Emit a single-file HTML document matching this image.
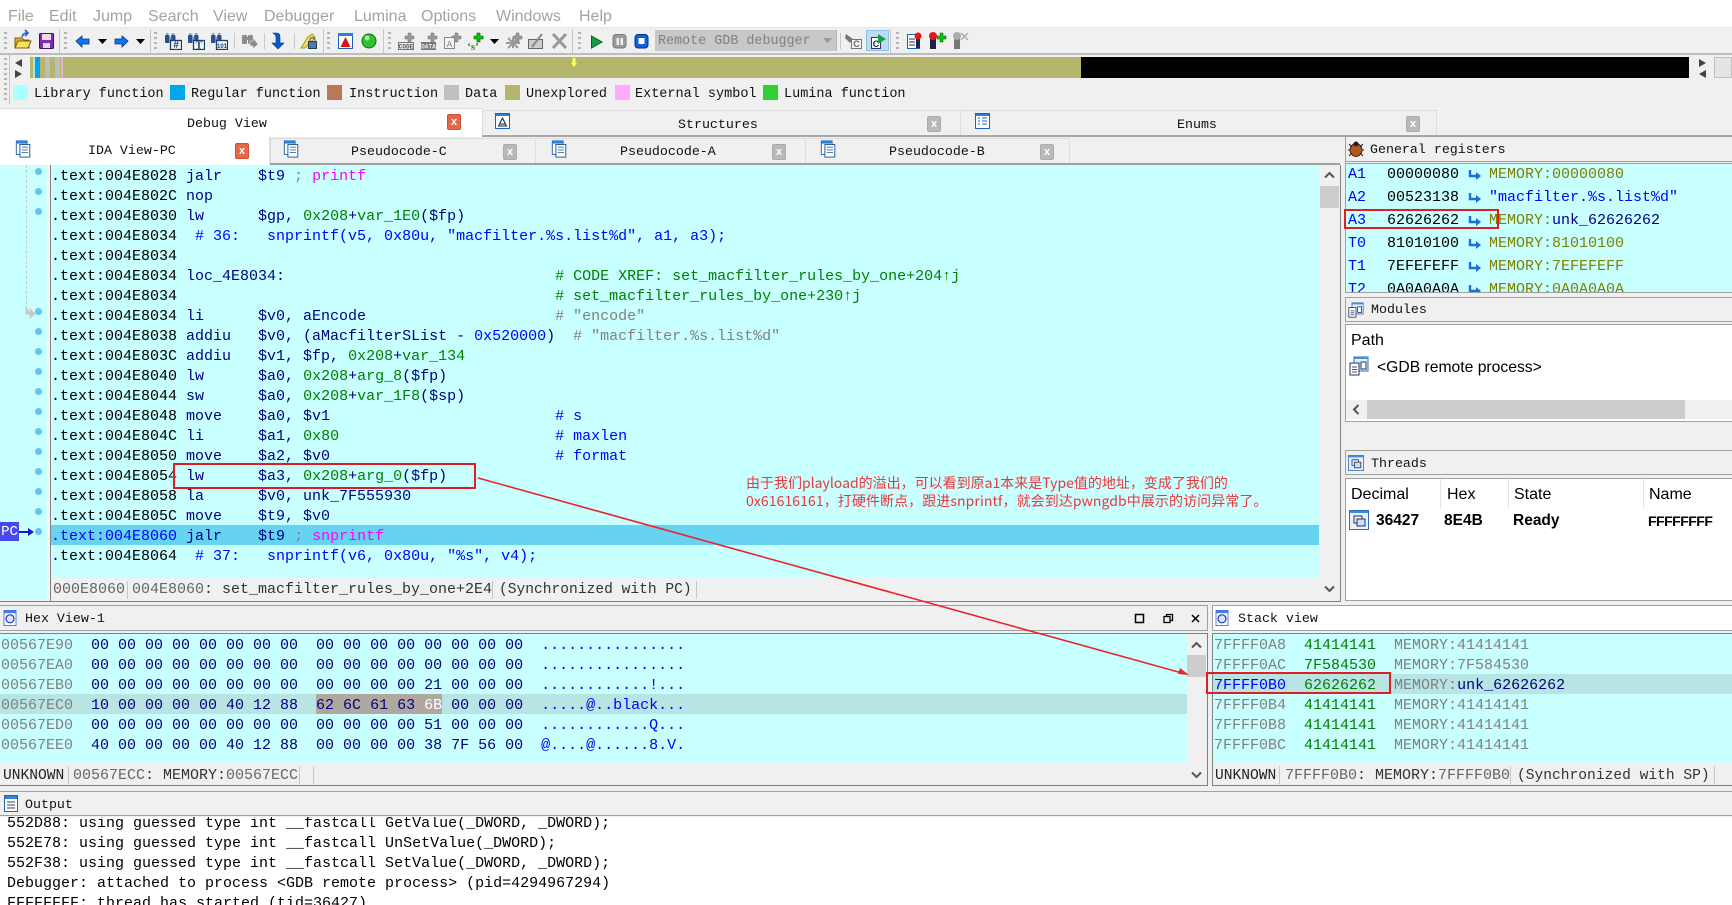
<!DOCTYPE html>
<html><head><meta charset="utf-8"><style>
html,body{margin:0;padding:0;background:#f0f0f0}
#p{position:relative;width:1732px;height:905px;overflow:hidden;background:#f0f0f0;font-family:"Liberation Mono",monospace;font-size:15px;color:#000}
.a{position:absolute}
.t{position:absolute;white-space:pre;line-height:20px;height:20px}
.m{position:absolute;top:6px;font:16px/22px "Liberation Sans",sans-serif;color:#a3a3a3;white-space:pre}
.l{position:absolute;top:85px;width:15px;height:15px}
.lt{position:absolute;top:85px;font-size:13.5px;line-height:20px;white-space:pre;color:#111}
.tt{position:absolute;font-size:13.3px;line-height:20px;white-space:pre;color:#111}
.x{position:absolute;width:12px;height:14px;border:1px solid #aaa;border-radius:2px;background:#b9b9b9;color:#fff;font:bold 11px/14px "Liberation Sans",sans-serif;text-align:center}
.x.r{background:#e5684a;border-color:#d05030}
.n{color:#000080}.g{color:#008000}.b{color:#0000ff}.k{color:#808080}.f{color:#ff00ff}.o{color:#808000}
.sep{position:absolute;width:1px;background:#c8c8c8}
.ic{position:absolute}
.dot{position:absolute;left:35px;width:7px;height:7px;border-radius:50%;background:#62c6f5}
.ttl{position:absolute;background:#f0f0f0;border:1px solid #a0a0a0;box-sizing:border-box}
.ui{font-family:"Liberation Sans",sans-serif}
.grip{position:absolute;width:3px;background:repeating-linear-gradient(#b4b4b4 0 2px,transparent 2px 5px)}
</style></head><body><div id="p">
<svg width="0" height="0" style="position:absolute"><defs>
<symbol id="doc" viewBox="0 0 18 20"><rect x="1" y="1" width="12" height="15" fill="#fff" stroke="#1a5fb4"/><rect x="1" y="1" width="12" height="3" fill="#2a80e0"/><rect x="5" y="5" width="11" height="14" fill="#fff" stroke="#1a4f94"/><path d="M7 8h7M7 11h7M7 14h7" stroke="#3a6fa4"/></symbol>
<symbol id="win" viewBox="0 0 20 20"><rect x=".5" y=".5" width="19" height="19" fill="#e8f0fa" stroke="#2a70c0"/><rect x="1" y="1" width="18" height="2" fill="#3a90e8"/><rect x="5" y="6" width="8" height="7" fill="none" stroke="#235"/><rect x="8" y="9" width="8" height="7" fill="#cfe0f5" stroke="#235"/></symbol>
<symbol id="hex" viewBox="0 0 16 20"><rect x=".5" y=".5" width="15" height="19" fill="#fff" stroke="#2a60d0"/><rect x="1" y="1" width="14" height="3" fill="#3a80e8"/><circle cx="8" cy="11" r="5" fill="#dde6ff" stroke="#2030c0" stroke-width="1.5"/></symbol>
<symbol id="mod" viewBox="0 0 20 20"><rect x="5" y="1" width="14" height="14" fill="#e8f0fa" stroke="#2a70c0"/><rect x="5" y="1" width="14" height="2" fill="#3a90e8"/><rect x="1" y="7" width="9" height="12" fill="#fff" stroke="#235"/><path d="M3 11h5M3 13.5h5M3 16h5" stroke="#357"/><rect x="12" y="6" width="5" height="7" fill="#fff" stroke="#235"/></symbol>
<symbol id="bino" viewBox="0 0 17 17"><rect x="0" y="2" width="4.500" height="8" rx="1" fill="#2a4f8a"/><rect x="6" y="2" width="4.500" height="8" rx="1" fill="#2a4f8a"/><rect x="4" y="4" width="2.500" height="3" fill="#7a94c0"/><rect x="1" y="0" width="2.500" height="2" fill="#8aa0c4"/><rect x="7" y="0" width="2.500" height="2" fill="#8aa0c4"/><rect x="5.500" y="7.500" width="11" height="9" fill="#f4f8fc" stroke="#14406e" stroke-width="1.300"/></symbol>
</defs></svg>

<!-- menu -->
<div class="a" style="left:0;top:0;width:1732px;height:27px;background:#fff"></div>
<span class="m" style="left:8px">File</span><span class="m" style="left:49px">Edit</span><span class="m" style="left:93px">Jump</span><span class="m" style="left:148px">Search</span><span class="m" style="left:213px">View</span><span class="m" style="left:264px">Debugger</span><span class="m" style="left:354px">Lumina</span><span class="m" style="left:421px">Options</span><span class="m" style="left:496px">Windows</span><span class="m" style="left:579px">Help</span>

<!-- toolbar -->
<div class="a" style="left:0;top:27px;width:1732px;height:1px;background:#e4e4e4"></div>
<div class="a" style="left:0;top:53px;width:1732px;height:2px;background:#bdbdbd"></div>
<div class="sep" style="left:59px;top:29px;height:24px"></div><div class="sep" style="left:150px;top:29px;height:24px"></div><div class="sep" style="left:323px;top:29px;height:24px"></div><div class="sep" style="left:383px;top:29px;height:24px"></div><div class="sep" style="left:572px;top:29px;height:24px"></div><div class="sep" style="left:890px;top:29px;height:24px"></div>
<div class="sep" style="left:234px;top:33px;height:16px"></div><div class="sep" style="left:264px;top:33px;height:16px"></div><div class="sep" style="left:294px;top:33px;height:16px"></div><div class="sep" style="left:840px;top:33px;height:16px"></div>
<div class="grip" style="left:4px;top:32px;height:20px"></div><div class="grip" style="left:64px;top:32px;height:20px"></div><div class="grip" style="left:154px;top:32px;height:20px"></div><div class="grip" style="left:327px;top:32px;height:20px"></div><div class="grip" style="left:388px;top:32px;height:20px"></div><div class="grip" style="left:578px;top:32px;height:20px"></div><div class="grip" style="left:896px;top:32px;height:20px"></div>

<svg class="ic" style="left:0;top:25px" width="1000" height="30" viewBox="0 0 1000 30">
<!-- open -->
<path d="M15 13h7l2 2h5v8H15z" fill="#d8b020" stroke="#806010"/><path d="M15 23l3-7h13l-3 7z" fill="#f8e060" stroke="#806010"/><path d="M22 12q1-4 5-4M25 5l3 3-3 3" fill="none" stroke="#2060d0" stroke-width="1.600"/>
<!-- save -->
<rect x="39.500" y="8.500" width="14" height="15" rx="1" fill="#7a2fb0" stroke="#401070"/><rect x="42" y="9" width="9" height="6" fill="#f4d8e8"/><rect x="43" y="18" width="7" height="5" fill="#ddd"/>
<!-- back / forward -->
<path d="M76 16l6-5v3h7v5h-7v3z" fill="#0a78e8" stroke="#003090" stroke-width=".8"/>
<path d="M128 16l-6-5v3h-7v5h7v3z" fill="#0a78e8" stroke="#003090" stroke-width=".8"/>
<path d="M98 14h9l-4.500 5zM136 14h9l-4.500 5zM490 14h9l-4.500 5z" fill="#000"/>
<!-- binoculars -->
<use href="#bino" x="165" y="8" width="17" height="17"/><use href="#bino" x="188" y="8" width="17" height="17"/><use href="#bino" x="211" y="8" width="17" height="17"/>
<text x="176" y="23" font-family="Liberation Sans" font-size="10" font-weight="bold" fill="#14406e" text-anchor="middle">#</text>
<text x="199" y="23.500" font-family="Liberation Serif" font-size="10" font-weight="bold" fill="#14406e" text-anchor="middle">T</text>
<text x="222" y="23" font-family="Liberation Sans" font-size="6" font-weight="bold" fill="#14406e" text-anchor="middle">101</text>
<!-- gray find next -->
<g fill="#8c8c8c"><rect x="242" y="10" width="5" height="9" rx="1"/><rect x="248" y="10" width="5" height="9" rx="1"/><rect x="246" y="12" width="3" height="3"/><path d="M250 16h3v-3l5 6-5 5v-3h-3z" stroke="#eee" stroke-width=".5"/></g>
<!-- jump down -->
<path d="M273 8h4q3 0 3 4v6h4l-6 6-6-6h4v-6q0-2-3-4z" fill="#0a58d0" stroke="#003a90" stroke-width=".6"/>
<!-- lock -->
<path d="M301 23l7-11 4-3 3 3-3 4-7 7z" fill="#f0dc70" stroke="#a89020"/><rect x="308.500" y="16.500" width="8" height="7" fill="#4a7ab0" stroke="#244"/><path d="M310 16v-2q2.500-3 5 0v2" fill="none" stroke="#555"/>
<!-- A -->
<rect x="338.500" y="8.500" width="14" height="15" fill="#fff" stroke="#1a60c0"/><rect x="338" y="8" width="15" height="3" fill="#2a80e0"/><path d="M345.500 12l5 10h-10z" fill="#e01010"/>
<circle cx="369" cy="16" r="7" fill="#30c030" stroke="#107010"/><circle cx="367" cy="13" r="2.500" fill="#a0f0a0"/>
<!-- add group -->
<g fill="#9a9a9a" stroke="#6e6e6e" stroke-width=".5">
<path d="M408 8h3v3h3v3h-3v3h-3v-3h-3v-3h3z"/><path d="M431 8h3v3h3v3h-3v3h-3v-3h-3v-3h3z"/><path d="M455 8h3v3h3v3h-3v3h-3v-3h-3v-3h3z"/><path d="M516 8h3v3h3v3h-3v3h-3v-3h-3v-3h3z"/>
</g>
<rect x="398.500" y="17.500" width="15" height="7" fill="#eee" stroke="#777"/><text x="406" y="23.500" font-family="Liberation Mono" font-size="6" font-weight="bold" fill="#555" text-anchor="middle">CODE</text>
<rect x="421" y="17" width="15" height="8" fill="#777"/><text x="428.500" y="23.500" font-family="Liberation Mono" font-size="6" font-weight="bold" fill="#eee" text-anchor="middle">DATA</text>
<rect x="444.500" y="12.500" width="10" height="11" fill="#f4f4f4" stroke="#888"/><text x="449.500" y="22" font-family="Liberation Mono" font-size="9" fill="#777" text-anchor="middle">A</text>
<path d="M477 8h3v3h3v3h-3v3h-3v-3h-3v-3h3z" fill="#10c010" stroke="#005000" stroke-width=".6"/>
<text x="473" y="25" font-family="Liberation Serif" font-size="11" font-weight="bold" fill="#2a8a2a" text-anchor="middle">‘s’</text>
<path d="M508 13l5 5 5-5M508 23l5-5 5 5M513 13v10M506 18h14" stroke="#999" stroke-width="2" fill="none"/>
<rect x="528.500" y="14.500" width="14" height="9" fill="#ccc" stroke="#666"/><path d="M532 22l10-13" stroke="#888" stroke-width="2"/>
<path d="M553 9l13 14M566 9l-13 14" stroke="#999" stroke-width="3"/>
<!-- play etc -->
<path d="M591.500 11l10.500 6-10.500 6z" fill="#189a40" stroke="#0a5a20"/>
<rect x="613" y="9.500" width="13" height="13.500" rx="3" fill="#9a9a9a" stroke="#777"/><rect x="616.500" y="13" width="2.500" height="7" fill="#eee"/><rect x="620.500" y="13" width="2.500" height="7" fill="#eee"/>
<rect x="635" y="9.500" width="13" height="13.500" rx="3" fill="#1060e0" stroke="#003090"/><rect x="638.500" y="13" width="6" height="6" fill="#fff"/>
<!-- C icons -->
<path d="M846 9l7 5-3 4-5-5z" fill="#777"/><rect x="851.500" y="14.500" width="10" height="9" fill="#f4f4f4" stroke="#777"/><text x="856.500" y="22" font-family="Liberation Sans" font-size="9" font-weight="bold" fill="#666" text-anchor="middle">C</text>
<rect x="866.500" y="5.500" width="22" height="20" fill="#bcdcf4" stroke="#90c0e8"/><rect x="871.500" y="12.500" width="9" height="11" fill="#fff" stroke="#336"/><text x="876" y="22" font-family="Liberation Sans" font-size="9" font-weight="bold" fill="#124" text-anchor="middle">C</text><path d="M878 9l8 5-8 5z" fill="#18a040"/>
<!-- bp -->
<rect x="907.500" y="9.500" width="12" height="14" fill="#fff" stroke="#1a60c0"/><path d="M909 14h6M909 17h6M909 20h6" stroke="#234"/><rect x="916" y="12" width="4" height="11" fill="#224"/><circle cx="918" cy="11" r="3.500" fill="#e01818"/>
<rect x="930" y="13" width="6" height="11" fill="#224"/><circle cx="933" cy="11" r="4" fill="#e01818"/><path d="M937 11h3V8h3v3h3v3h-3v3h-3v-3h-3z" fill="#10c010" stroke="#005000" stroke-width=".5"/>
<rect x="954" y="13" width="6" height="11" fill="#777"/><circle cx="957" cy="11" r="4" fill="#aaa"/><path d="M961 8l7 7M968 8l-7 7" stroke="#aaa" stroke-width="1.400"/>
</svg>
<div class="a" style="left:655px;top:30px;width:181px;height:21px;background:#c8c8c8;border-right:1px solid #b8b8b8"></div>
<span class="t" style="left:658px;top:32px;color:#808080;font-size:13.4px">Remote GDB debugger</span>
<svg class="ic" style="left:823px;top:38px" width="10" height="6"><path d="M0 0h9L4.500 5z" fill="#999"/></svg>

<!-- overview nav -->
<div class="a" style="left:30px;top:57px;width:1051px;height:21px;background:#b5b56c"></div>
<div class="a" style="left:30px;top:57px;width:34px;height:21px;background:linear-gradient(90deg,#b5b56c 0 3px,#b0e8d8 3px 5px,#08a0e8 5px 10px,#b5b56c 10px 15px,#bdbdbd 15px 20px,#b5b56c 20px 25px,#bdbdbd 25px 30px,#b5b56c 30px 31px,#e8b0d8 31px 33px,#b5b56c 33px)"></div>
<div class="a" style="left:1081px;top:57px;width:608px;height:21px;background:#000"></div>
<svg class="ic" style="left:571px;top:58px" width="6" height="9"><path d="M1.500 0h3v5H6L3 9 0 5h1.500z" fill="#ffff60"/></svg>
<svg class="ic" style="left:15px;top:59px" width="8" height="19"><path d="M7 0v8L0 4zM0 11l7 4-7 4z" fill="#444"/></svg>
<svg class="ic" style="left:1699px;top:59px" width="8" height="19"><path d="M0 0l7 4-7 4zM7 11v8L0 15z" fill="#444"/></svg>
<div class="a" style="left:1714px;top:57px;width:18px;height:21px;background:#e4e4e4;border:1px solid #c0c0c0;box-sizing:border-box"></div>
<div class="grip" style="left:4px;top:58px;height:45px"></div>
<div class="a" style="left:9px;top:54px;width:1px;height:50px;background:#c8c8c8"></div>

<!-- legend -->
<div class="l" style="left:13px;background:#aaffff"></div><span class="lt" style="left:34px">Library function</span>
<div class="l" style="left:170px;background:#00a8e8"></div><span class="lt" style="left:191px">Regular function</span>
<div class="l" style="left:327px;background:#b8785a"></div><span class="lt" style="left:349px">Instruction</span>
<div class="l" style="left:444px;background:#c0c0c0"></div><span class="lt" style="left:465px">Data</span>
<div class="l" style="left:505px;background:#b5b56c"></div><span class="lt" style="left:526px">Unexplored</span>
<div class="l" style="left:615px;background:#ffaaff"></div><span class="lt" style="left:635px">External symbol</span>
<div class="l" style="left:763px;background:#30d030"></div><span class="lt" style="left:784px">Lumina function</span>

<!-- top tabs -->
<div class="a" style="left:0;top:135px;width:1732px;height:2px;background:#a8a8a8"></div>
<div class="a" style="left:482px;top:110px;width:955px;height:25px;border:1px solid #dcdcdc;border-bottom:0;box-sizing:border-box"></div>
<div class="a" style="left:960px;top:110px;width:1px;height:25px;background:#dcdcdc"></div>
<div class="a" style="left:0;top:108px;width:482px;height:29px;background:#fff;border-top:1px solid #ddd;box-sizing:border-box"></div>
<span class="tt" style="left:187px;top:114px">Debug View</span><span class="tt" style="left:678px;top:115px">Structures</span><span class="tt" style="left:1177px;top:115px">Enums</span>
<div class="x r" style="left:447px;top:114px">x</div><div class="x" style="left:927px;top:116px">x</div><div class="x" style="left:1406px;top:116px">x</div>
<svg class="ic" style="left:495px;top:113px" width="15" height="16"><rect x=".5" y=".5" width="14" height="15" fill="#fff" stroke="#1a60c0"/><rect x="1" y="1" width="13" height="2" fill="#2a80e0"/><path d="M7.500 5l4 8h-8zM5 11h5" fill="none" stroke="#124"/></svg>
<svg class="ic" style="left:975px;top:113px" width="15" height="16"><rect x=".5" y=".5" width="14" height="15" fill="#fff" stroke="#1a60c0"/><rect x="1" y="1" width="13" height="2" fill="#2a80e0"/><path d="M3 5h2M7 5h5M3 8h2M7 8h5M3 11h2M7 11h5" stroke="#1a60c0"/></svg>

<!-- second tabs -->
<div class="a" style="left:0;top:163px;width:1340px;height:2px;background:#a0a0a0"></div>
<div class="a" style="left:270px;top:138px;width:800px;height:25px;border:1px solid #dcdcdc;border-bottom:0;box-sizing:border-box"></div>
<div class="a" style="left:535px;top:138px;width:1px;height:25px;background:#dcdcdc"></div><div class="a" style="left:805px;top:138px;width:1px;height:25px;background:#dcdcdc"></div>
<div class="a" style="left:0;top:136px;width:270px;height:29px;background:#fff;border-right:1px solid #ddd;box-sizing:border-box"></div>
<span class="tt" style="left:88px;top:141px">IDA View-PC</span><span class="tt" style="left:351px;top:142px">Pseudocode-C</span><span class="tt" style="left:620px;top:142px">Pseudocode-A</span><span class="tt" style="left:889px;top:142px">Pseudocode-B</span>
<div class="x r" style="left:235px;top:143px">x</div><div class="x" style="left:503px;top:144px">x</div><div class="x" style="left:772px;top:144px">x</div><div class="x" style="left:1040px;top:144px">x</div>
<svg class="ic" style="left:15px;top:140px" width="17" height="18"><use href="#doc"/></svg><svg class="ic" style="left:283px;top:140px" width="17" height="18"><use href="#doc"/></svg><svg class="ic" style="left:551px;top:140px" width="17" height="18"><use href="#doc"/></svg><svg class="ic" style="left:820px;top:140px" width="17" height="18"><use href="#doc"/></svg>

<!-- gutter + code -->
<div class="a" style="left:0;top:165px;width:47px;height:435px;background:#c8ffff"></div>
<div class="a" style="left:47px;top:165px;width:3px;height:435px;background:#f4f4f4"></div>
<div class="a" style="left:50px;top:165px;width:1270px;height:413px;background:#c8ffff"></div>
<div class="a" style="left:50px;top:165px;width:1px;height:436px;background:#808080"></div>
<div class="a" style="left:51px;top:525px;width:1268px;height:20px;background:#66d4f0"></div>
<div class="a" style="left:26px;top:165px;width:0;height:144px;border-left:1px dashed #c8c8c8"></div>
<svg class="ic" style="left:25px;top:305px" width="12" height="14"><path d="M1 0v9h4M5 4l5 5-5 4z" fill="#c8c8c8" stroke="#c8c8c8"/></svg>
<div class="dot" style="top:168px"></div><div class="dot" style="top:188px"></div><div class="dot" style="top:208px"></div><div class="dot" style="top:308px"></div><div class="dot" style="top:328px"></div><div class="dot" style="top:348px"></div><div class="dot" style="top:368px"></div><div class="dot" style="top:388px"></div><div class="dot" style="top:408px"></div><div class="dot" style="top:428px"></div><div class="dot" style="top:448px"></div><div class="dot" style="top:468px"></div><div class="dot" style="top:488px"></div><div class="dot" style="top:508px"></div><div class="dot" style="top:528px"></div>
<div class="a" style="left:0;top:522px;width:19px;height:19px;background:#4848f0;color:#fff;font-size:14px;line-height:20px;text-align:center">PC</div>
<svg class="ic" style="left:19px;top:526px" width="16" height="12"><path d="M0 6h11" stroke="#1818d0" stroke-width="2"/><path d="M9 2l6 4-6 4z" fill="#1818d0"/></svg>

<div class="t" style="left:51px;top:167px">.text:004E8028 <span class="n">jalr    $t9</span> <span class="k">;</span> <span class="f">printf</span></div>
<div class="t" style="left:51px;top:187px">.text:004E802C <span class="n">nop</span></div>
<div class="t" style="left:51px;top:207px">.text:004E8030 <span class="n">lw      $gp, </span><span class="g">0x208</span><span class="n">+</span><span class="g">var_1E0</span><span class="n">($fp)</span></div>
<div class="t" style="left:51px;top:227px">.text:004E8034  <span class="b"># 36:   snprintf(v5, 0x80u, "macfilter.%s.list%d", a1, a3);</span></div>
<div class="t" style="left:51px;top:247px">.text:004E8034</div>
<div class="t" style="left:51px;top:267px">.text:004E8034 <span class="n">loc_4E8034:</span>                              <span class="g"># CODE XREF: set_macfilter_rules_by_one+204↑j</span></div>
<div class="t" style="left:51px;top:287px">.text:004E8034                                          <span class="g"># set_macfilter_rules_by_one+230↑j</span></div>
<div class="t" style="left:51px;top:307px">.text:004E8034 <span class="n">li      $v0, aEncode</span>                     <span class="k"># "encode"</span></div>
<div class="t" style="left:51px;top:327px">.text:004E8038 <span class="n">addiu   $v0, (aMacfilterSList - </span><span class="b">0x520000</span><span class="n">)</span>  <span class="k"># "macfilter.%s.list%d"</span></div>
<div class="t" style="left:51px;top:347px">.text:004E803C <span class="n">addiu   $v1, $fp, </span><span class="g">0x208</span><span class="n">+</span><span class="g">var_134</span></div>
<div class="t" style="left:51px;top:367px">.text:004E8040 <span class="n">lw      $a0, </span><span class="g">0x208</span><span class="n">+</span><span class="g">arg_8</span><span class="n">($fp)</span></div>
<div class="t" style="left:51px;top:387px">.text:004E8044 <span class="n">sw      $a0, </span><span class="g">0x208</span><span class="n">+</span><span class="g">var_1F8</span><span class="n">($sp)</span></div>
<div class="t" style="left:51px;top:407px">.text:004E8048 <span class="n">move    $a0, $v1</span>                         <span class="b"># s</span></div>
<div class="t" style="left:51px;top:427px">.text:004E804C <span class="n">li      $a1, </span><span class="g">0x80</span>                        <span class="b"># maxlen</span></div>
<div class="t" style="left:51px;top:447px">.text:004E8050 <span class="n">move    $a2, $v0</span>                         <span class="b"># format</span></div>
<div class="t" style="left:51px;top:467px">.text:004E8054 <span class="n">lw      $a3, </span><span class="g">0x208</span><span class="n">+</span><span class="g">arg_0</span><span class="n">($fp)</span></div>
<div class="t" style="left:51px;top:487px">.text:004E8058 <span class="n">la      $v0, unk_7F555930</span></div>
<div class="t" style="left:51px;top:507px">.text:004E805C <span class="n">move    $t9, $v0</span></div>
<div class="t" style="left:51px;top:527px"><span class="b">.text:004E8060</span> <span class="n">jalr    $t9</span> <span class="k">;</span> <span class="f">snprintf</span></div>
<div class="t" style="left:51px;top:547px">.text:004E8064  <span class="b"># 37:   snprintf(v6, 0x80u, "%s", v4);</span></div>

<div class="a" style="left:51px;top:578px;width:1269px;height:23px;background:#f0f0f0"></div>
<div class="sep" style="left:127px;top:581px;height:18px"></div><div class="sep" style="left:492px;top:581px;height:18px"></div><div class="sep" style="left:696px;top:581px;height:18px"></div>
<div class="t" style="left:53px;top:580px;color:#666">000E8060</div>
<div class="t" style="left:132px;top:580px;color:#333"><span style="color:#666">004E8060</span>: set_macfilter_rules_by_one+2E4</div>
<div class="t" style="left:499px;top:580px;color:#333;font-size:14.6px">(Synchronized with PC)</div>
<!-- code scrollbar -->
<div class="a" style="left:1320px;top:165px;width:20px;height:436px;background:#f0f0f0"></div>
<div class="a" style="left:1320px;top:186px;width:19px;height:22px;background:#cdcdcd"></div>
<svg class="ic" style="left:1324px;top:171px" width="11" height="8"><path d="M1 6.500l4.500-4.500 4.500 4.500" fill="none" stroke="#555" stroke-width="2"/></svg>
<svg class="ic" style="left:1324px;top:585px" width="11" height="8"><path d="M1 1.500l4.500 4.500 4.500-4.500" fill="none" stroke="#555" stroke-width="2"/></svg>
<div class="a" style="left:1340px;top:165px;width:1px;height:437px;background:#808080"></div>
<div class="a" style="left:0;top:601px;width:1341px;height:1px;background:#808080"></div>

<!-- annotation -->
<div class="a" style="left:746px;top:473px;font:14px/20px 'Noto Sans CJK SC',sans-serif;color:#e8383c;white-space:pre">由于我们playload的溢出，可以看到原a1本来是Type值的地址，变成了我们的</div>
<div class="a" style="left:746px;top:491px;font:14px/20px 'Noto Sans CJK SC',sans-serif;color:#e8383c;white-space:pre;letter-spacing:.08px">0x61616161，打硬件断点，跟进snprintf，就会到达pwngdb中展示的访问异常了。</div>

<!-- right: registers -->
<div class="ttl" style="left:1345px;top:136px;width:387px;height:26px;border-right:0"></div>
<svg class="ic" style="left:1348px;top:141px" width="16" height="16"><ellipse cx="8" cy="9" rx="6" ry="6.500" fill="#b5581f" stroke="#4a2008"/><circle cx="8" cy="3" r="2.500" fill="#222"/><path d="M1 3l3 3M15 3l-3 3M0 9h2M14 9h2M1 15l3-3M15 15l-3-3" stroke="#222"/></svg>
<span class="tt" style="left:1370px;top:140px">General registers</span>
<div class="a" style="left:1345px;top:163px;width:387px;height:130px;background:#c8ffff;border:1px solid #a0a0a0;border-right:0;box-sizing:border-box;overflow:hidden">
<div class="t" style="left:2px;top:1px"><span class="b">A1</span></div><div class="t" style="left:41px;top:1px">00000080</div><div class="t" style="left:143px;top:1px"><span class="o">MEMORY:00000080</span></div>
<div class="t" style="left:2px;top:24px"><span class="b">A2</span></div><div class="t" style="left:41px;top:24px">00523138</div><div class="t" style="left:143px;top:24px"><span class="b">"macfilter.%s.list%d"</span></div>
<div class="t" style="left:2px;top:47px"><span class="b">A3</span></div><div class="t" style="left:41px;top:47px">62626262</div><div class="t" style="left:143px;top:47px"><span class="o">MEMORY:</span><span class="n">unk_62626262</span></div>
<div class="t" style="left:2px;top:70px"><span class="b">T0</span></div><div class="t" style="left:41px;top:70px">81010100</div><div class="t" style="left:143px;top:70px"><span class="o">MEMORY:81010100</span></div>
<div class="t" style="left:2px;top:93px"><span class="b">T1</span></div><div class="t" style="left:41px;top:93px">7EFEFEFF</div><div class="t" style="left:143px;top:93px"><span class="o">MEMORY:7EFEFEFF</span></div>
<div class="t" style="left:2px;top:116px"><span class="b">T2</span></div><div class="t" style="left:41px;top:116px">0A0A0A0A</div><div class="t" style="left:143px;top:116px"><span class="o">MEMORY:0A0A0A0A</span></div>
<svg class="ic" style="left:122px;top:1px" width="15" height="130"><g fill="none" stroke="#1a70d8" stroke-width="2.400"><path d="M2 5v6h7M2 28v6h7M2 51v6h7M2 74v6h7M2 97v6h7M2 120v6h7"/></g><path d="M8 7l5 4-5 4zM8 30l5 4-5 4zM8 53l5 4-5 4zM8 76l5 4-5 4zM8 99l5 4-5 4zM8 122l5 4-5 4z" fill="#1a70d8"/></svg>
</div>
<div class="a" style="left:1344px;top:209px;width:155px;height:20px;border:2px solid #e01c24;box-sizing:border-box"></div>

<!-- modules -->
<div class="ttl" style="left:1345px;top:297px;width:387px;height:25px;border-right:0"></div>
<svg class="ic" style="left:1348px;top:302px" width="16" height="16"><use href="#mod"/></svg>
<span class="tt" style="left:1371px;top:300px">Modules</span>
<div class="a" style="left:1345px;top:324px;width:387px;height:98px;background:#fff;border:1px solid #a0a0a0;border-right:0;box-sizing:border-box"></div>
<span class="a ui" style="left:1351px;top:331px;font-size:16px;line-height:20px">Path</span>
<svg class="ic" style="left:1349px;top:356px" width="20" height="20"><use href="#mod"/></svg>
<span class="a ui" style="left:1377px;top:358px;font-size:15.7px;line-height:20px;white-space:pre">&lt;GDB remote process&gt;</span>
<div class="a" style="left:1346px;top:400px;width:386px;height:19px;background:#f0f0f0"></div>
<div class="a" style="left:1367px;top:400px;width:318px;height:19px;background:#cdcdcd"></div>
<svg class="ic" style="left:1352px;top:404px" width="8" height="11"><path d="M6.500 1l-4.500 4.500 4.500 4.500" fill="none" stroke="#555" stroke-width="2"/></svg>

<!-- threads -->
<div class="ttl" style="left:1345px;top:450px;width:387px;height:25px;border-right:0"></div>
<svg class="ic" style="left:1348px;top:455px" width="16" height="16"><use href="#win"/></svg>
<span class="tt" style="left:1371px;top:454px">Threads</span>
<div class="a" style="left:1345px;top:478px;width:387px;height:123px;background:#fff;border:1px solid #a0a0a0;border-right:0;box-sizing:border-box"></div>
<div class="sep" style="left:1440px;top:479px;height:29px;background:#e4e4e4"></div><div class="sep" style="left:1508px;top:479px;height:29px;background:#e4e4e4"></div><div class="sep" style="left:1643px;top:479px;height:29px;background:#e4e4e4"></div>
<span class="a ui" style="left:1351px;top:485px;font-size:16px;line-height:20px">Decimal</span><span class="a ui" style="left:1447px;top:485px;font-size:16px;line-height:20px">Hex</span><span class="a ui" style="left:1514px;top:485px;font-size:16px;line-height:20px">State</span><span class="a ui" style="left:1649px;top:485px;font-size:16px;line-height:20px">Name</span>
<svg class="ic" style="left:1349px;top:510px" width="20" height="20"><use href="#win"/></svg>
<span class="a ui" style="left:1376px;top:511px;font-size:15.5px;line-height:20px;font-weight:bold">36427</span><span class="a ui" style="left:1444px;top:511px;font-size:15.5px;line-height:20px;font-weight:bold">8E4B</span><span class="a ui" style="left:1513px;top:511px;font-size:15.5px;line-height:20px;font-weight:bold">Ready</span><span class="a ui" style="left:1648px;top:511px;font-size:14px;line-height:20px;font-weight:bold;letter-spacing:-.5px">FFFFFFFF</span>

<!-- hex view -->
<div class="ttl" style="left:0;top:605px;width:1208px;height:26px;border-left:0"></div>
<svg class="ic" style="left:3px;top:610px" width="14" height="16"><use href="#hex"/></svg>
<span class="tt" style="left:25px;top:609px">Hex View-1</span>
<svg class="ic" style="left:1134px;top:613px" width="70" height="12"><rect x="1.500" y="1.500" width="8" height="8" fill="none" stroke="#000" stroke-width="1.500"/><path d="M30 3.500h6v6h-6zM32.500 3.500v-2h6v6h-2" fill="none" stroke="#000" stroke-width="1.300"/><path d="M58 2l7 7M65 2l-7 7" stroke="#000" stroke-width="1.500"/></svg>
<div class="a" style="left:0;top:633px;width:1208px;height:153px;border:1px solid #808080;border-left:0;box-sizing:border-box;background:#f0f0f0"></div>
<div class="a" style="left:0;top:634px;width:1187px;height:129px;background:#c8ffff"></div>
<div class="a" style="left:0;top:694px;width:1187px;height:20px;background:#b8e4e4"></div>
<div class="a" style="left:316px;top:694px;width:126px;height:20px;background:#b0a8a0"></div>
<div class="t n" style="left:1px;top:636px"><span class="k">00567E90</span>  00 00 00 00 00 00 00 00  00 00 00 00 00 00 00 00  <span class="b">................</span></div>
<div class="t n" style="left:1px;top:656px"><span class="k">00567EA0</span>  00 00 00 00 00 00 00 00  00 00 00 00 00 00 00 00  <span class="b">................</span></div>
<div class="t n" style="left:1px;top:676px"><span class="k">00567EB0</span>  00 00 00 00 00 00 00 00  00 00 00 00 21 00 00 00  <span class="b">............!...</span></div>
<div class="t n" style="left:1px;top:696px"><span class="k">00567EC0</span>  10 00 00 00 00 40 12 88  62 6C 61 63 <span style="color:#fff">6B</span> 00 00 00  <span class="b">.....@..black...</span></div>
<div class="t n" style="left:1px;top:716px"><span class="k">00567ED0</span>  00 00 00 00 00 00 00 00  00 00 00 00 51 00 00 00  <span class="b">............Q...</span></div>
<div class="t n" style="left:1px;top:736px"><span class="k">00567EE0</span>  40 00 00 00 00 40 12 88  00 00 00 00 38 7F 56 00  <span class="b">@....@......8.V.</span></div>
<div class="sep" style="left:68px;top:766px;height:18px"></div><div class="sep" style="left:299px;top:766px;height:18px"></div><div class="sep" style="left:313px;top:766px;height:18px"></div>
<div class="t" style="left:3px;top:766px;color:#222;font-size:14.6px">UNKNOWN</div>
<div class="t" style="left:73px;top:766px;color:#333"><span style="color:#666">00567ECC</span>: MEMORY:<span style="color:#666">00567ECC</span></div>
<div class="a" style="left:1187px;top:634px;width:20px;height:151px;background:#f0f0f0"></div>
<div class="a" style="left:1187px;top:655px;width:19px;height:22px;background:#cdcdcd"></div>
<svg class="ic" style="left:1191px;top:641px" width="11" height="8"><path d="M1 6.500l4.500-4.500 4.500 4.500" fill="none" stroke="#555" stroke-width="2"/></svg>
<svg class="ic" style="left:1191px;top:771px" width="11" height="8"><path d="M1 1.500l4.500 4.500 4.500-4.500" fill="none" stroke="#555" stroke-width="2"/></svg>

<!-- stack -->
<div class="ttl" style="left:1212px;top:605px;width:520px;height:26px;background:#fff;border-right:0"></div>
<svg class="ic" style="left:1215px;top:610px" width="14" height="16"><use href="#hex"/></svg>
<span class="tt" style="left:1238px;top:609px">Stack view</span>
<div class="a" style="left:1212px;top:633px;width:520px;height:153px;border:1px solid #808080;border-right:0;box-sizing:border-box;background:#f0f0f0"></div>
<div class="a" style="left:1213px;top:634px;width:519px;height:129px;background:#c8ffff"></div>
<div class="a" style="left:1213px;top:674px;width:519px;height:20px;background:#b8e4e4"></div>
<div class="t k" style="left:1214px;top:636px">7FFFF0A8  <span class="g">41414141</span>  MEMORY:41414141</div>
<div class="t k" style="left:1214px;top:656px">7FFFF0AC  <span class="g">7F584530</span>  MEMORY:7F584530</div>
<div class="t k" style="left:1214px;top:676px"><span class="b">7FFFF0B0</span>  <span class="g">62626262</span>  MEMORY:<span class="n">unk_62626262</span></div>
<div class="t k" style="left:1214px;top:696px">7FFFF0B4  <span class="g">41414141</span>  MEMORY:41414141</div>
<div class="t k" style="left:1214px;top:716px">7FFFF0B8  <span class="g">41414141</span>  MEMORY:41414141</div>
<div class="t k" style="left:1214px;top:736px">7FFFF0BC  <span class="g">41414141</span>  MEMORY:41414141</div>
<div class="sep" style="left:1279px;top:766px;height:18px"></div><div class="sep" style="left:1510px;top:766px;height:18px"></div><div class="sep" style="left:1714px;top:766px;height:18px"></div>
<div class="t" style="left:1215px;top:766px;color:#222;font-size:14.6px">UNKNOWN</div>
<div class="t" style="left:1285px;top:766px;color:#333"><span style="color:#666">7FFFF0B0</span>: MEMORY:<span style="color:#666">7FFFF0B0</span></div>
<div class="t" style="left:1517px;top:766px;font-size:14.6px;color:#333">(Synchronized with SP)</div>

<!-- output -->
<div class="ttl" style="left:0;top:791px;width:1732px;height:25px;border-left:0;border-right:0"></div>
<svg class="ic" style="left:4px;top:795px" width="14" height="17"><rect x=".5" y=".5" width="13" height="16" fill="#fff" stroke="#2a60a0"/><rect x="1" y="1" width="12" height="3" fill="#3a80d8"/><path d="M3 7h8M3 10h8M3 13h8" stroke="#345"/></svg>
<span class="tt" style="left:25px;top:795px">Output</span>
<div class="a" style="left:0;top:817px;width:1732px;height:88px;background:#fff;overflow:hidden">
<div class="t" style="left:7px;top:-3px">552D88: using guessed type int __fastcall GetValue(_DWORD, _DWORD);</div>
<div class="t" style="left:7px;top:17px">552E78: using guessed type int __fastcall UnSetValue(_DWORD);</div>
<div class="t" style="left:7px;top:37px">552F38: using guessed type int __fastcall SetValue(_DWORD, _DWORD);</div>
<div class="t" style="left:7px;top:57px">Debugger: attached to process &lt;GDB remote process&gt; (pid=4294967294)</div>
<div class="t" style="left:7px;top:77px">FFFFFFFF: thread has started (tid=36427)</div>
</div>

<!-- red annotation overlay -->
<svg class="ic" style="left:0;top:0" width="1732" height="905">
<rect x="174" y="464" width="301" height="24" fill="none" stroke="#e01c24" stroke-width="2"/>
<rect x="1207" y="673" width="183" height="20" fill="none" stroke="#e01c24" stroke-width="2"/>
<path d="M478 478L1182 673" stroke="#e9242c" stroke-width="1.600"/>
<path d="M1189 675l-11-1 2-6z" fill="#e9242c"/>
</svg>
</div></body></html>
